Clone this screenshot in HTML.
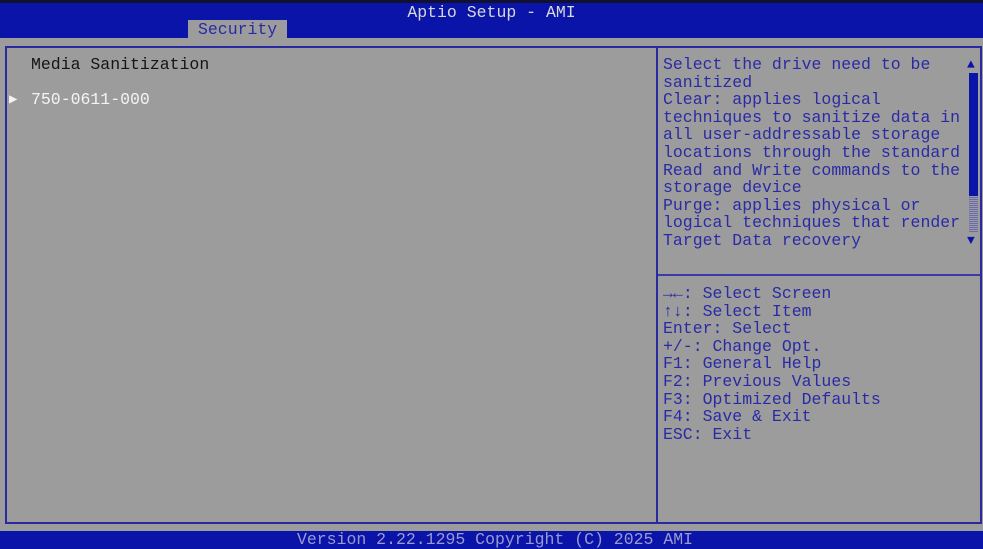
<!DOCTYPE html>
<html><head><meta charset="utf-8"><style>
*{margin:0;padding:0}
body{width:983px;height:549px;overflow:hidden;background:#9c9c9c;position:relative;font-family:"Liberation Mono","DejaVu Sans Mono",monospace;font-size:16.5px;}
.a{position:absolute;white-space:pre;line-height:18px}
.b{color:#2a2aa6}
.w{color:#f4f4f4}
.k{color:#151515}
</style></head><body>
<div style="position:absolute;left:0;top:0;width:983px;height:3px;background:#101030"></div>
<div style="position:absolute;left:0;top:3px;width:983px;height:35px;background:#0a14a8"></div>
<div class="a" style="left:0;width:983px;top:4px;text-align:center;color:#d8d8d8">Aptio Setup - AMI</div>
<div style="position:absolute;left:188px;top:20px;width:99px;height:18px;background:#9c9c9c"></div>
<div class="a b" style="left:198px;top:21px">Security</div>
<div style="position:absolute;left:5px;top:46px;width:973px;height:474px;border:2px solid #2a2aa0"></div>
<div style="position:absolute;left:656px;top:46px;width:2px;height:476px;background:#2a2aa0"></div>
<div style="position:absolute;left:658px;top:274px;width:322px;height:2px;background:#3a3aa8"></div>
<div class="a k" style="left:31px;top:56px">Media Sanitization</div>
<div class="a w" style="left:9px;top:91px;font-size:14px">&#9654;</div>
<div class="a w" style="left:31px;top:91px">750-0611-000</div>
<div class="a b" style="left:663px;top:56px;line-height:17.6px">Select the drive need to be
sanitized
Clear: applies logical
techniques to sanitize data in
all user-addressable storage
locations through the standard
Read and Write commands to the
storage device
Purge: applies physical or
logical techniques that render
Target Data recovery</div>
<div class="a" style="left:967px;top:56px;font-size:13px;color:#0a14a8">&#9650;</div>
<div style="position:absolute;left:969px;top:73px;width:9px;height:123px;background:#0a14a8"></div>
<div style="position:absolute;left:969px;top:196px;width:9px;height:36px;background:repeating-linear-gradient(0deg,#6a6ab0 0 1px,#9c9c9c 1px 2px)"></div>
<div class="a" style="left:967px;top:232px;font-size:13px;color:#0a14a8">&#9660;</div>
<div class="a b" style="left:663px;top:285px;line-height:17.6px"><b>&#8594;&#8592;</b>: Select Screen
<b>&#8593;&#8595;</b>: Select Item
Enter: Select
+/-: Change Opt.
F1: General Help
F2: Previous Values
F3: Optimized Defaults
F4: Save &amp; Exit
ESC: Exit</div>
<div style="position:absolute;left:0;top:531px;width:983px;height:18px;background:#0a14a8"></div>
<div class="a" style="left:0;width:990px;top:531px;text-align:center;color:#9a9ad0">Version 2.22.1295 Copyright (C) 2025 AMI</div>
</body></html>
